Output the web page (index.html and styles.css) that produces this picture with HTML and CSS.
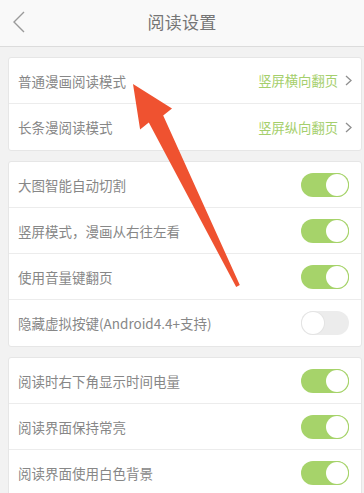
FILE: index.html
```html
<!DOCTYPE html>
<html lang="zh">
<head>
<meta charset="utf-8">
<link rel="stylesheet" href="styles.css">
</head>
<body>
<div class="page">
  <header class="topbar">
    <svg class="back" width="14" height="24" viewBox="0 0 14 24"><path d="M12 2 L2 12 L12 22" fill="none" stroke="#9a9a9a" stroke-width="1.4"/></svg>
    <h1 class="title">阅读设置</h1>
  </header>

  <section class="card">
    <div class="row">
      <span class="label">普通漫画阅读模式</span>
      <span class="value">竖屏横向翻页<svg class="chev" width="7" height="11" viewBox="0 0 7 11"><path d="M1 1 L6 5.5 L1 10" fill="none" stroke="#8f8f8f" stroke-width="1.3"/></svg></span>
    </div>
    <div class="row">
      <span class="label">长条漫阅读模式</span>
      <span class="value">竖屏纵向翻页<svg class="chev" width="7" height="11" viewBox="0 0 7 11"><path d="M1 1 L6 5.5 L1 10" fill="none" stroke="#8f8f8f" stroke-width="1.3"/></svg></span>
    </div>
  </section>

  <section class="card">
    <div class="row"><span class="label">大图智能自动切割</span><span class="toggle on"></span></div>
    <div class="row"><span class="label">竖屏模式，漫画从右往左看</span><span class="toggle on"></span></div>
    <div class="row"><span class="label">使用音量键翻页</span><span class="toggle on"></span></div>
    <div class="row"><span class="label">隐藏虚拟按键(Android4.4+支持)</span><span class="toggle"></span></div>
  </section>

  <section class="card">
    <div class="row"><span class="label">阅读时右下角显示时间电量</span><span class="toggle on"></span></div>
    <div class="row"><span class="label">阅读界面保持常亮</span><span class="toggle on"></span></div>
    <div class="row"><span class="label">阅读界面使用白色背景</span><span class="toggle on"></span></div>
  </section>

  <svg class="arrow" width="364" height="493" viewBox="0 0 364 493">
    <polygon fill="#ef5230" points="133,84 172,108.6 163.2,115.5 239.8,285.1 236.2,286.9 148.8,122.5 140.1,129.4"/>
  </svg>
</div>
</body>
</html>
```

FILE: styles.css
```css
* { box-sizing: border-box; }
html, body { margin: 0; padding: 0; }
body {
  background: #f2f2f2;
  font-family: "Noto Sans CJK SC", "Noto Sans", sans-serif;
  width: 364px;
  height: 493px;
  overflow: hidden;
}
.page { position: relative; height: 493px; }
.topbar {
  height: 47px;
  background: #f9f9f9;
  border-bottom: 1px solid #dcdcdc;
  display: flex;
  align-items: center;
  justify-content: center;
  position: relative;
}
.back { position: absolute; left: 12px; top: 10px; }
.title {
  margin: 0;
  font-size: 17px;
  font-weight: normal;
  color: #757575;
  letter-spacing: 0.2px;
  margin-top: -3px;
}
.card {
  margin: 10px 2px 0 8px;
  background: #fff;
  border: 1px solid #e6e6e6;
  border-radius: 3px;
}
.row {
  height: 46px;
  display: flex;
  align-items: center;
  justify-content: space-between;
  padding: 0 12px 0 9px;
  border-bottom: 1px solid #ececec;
}
.row:last-child { border-bottom: none; }
.label {
  font-size: 13.5px;
  color: #878787;
}
.value {
  font-size: 13.3px;
  color: #a5cf6c;
  display: flex;
  align-items: center;
  margin-right: -3px;
}
.chev { margin-left: 7px; }
.toggle {
  width: 48px;
  height: 24px;
  border-radius: 12px;
  background: #ececec;
  position: relative;
  flex: none;
}
.toggle::after {
  content: "";
  position: absolute;
  top: 1px;
  left: 1px;
  width: 22px;
  height: 22px;
  border-radius: 50%;
  background: #fff;
  box-shadow: 0 0 0 1px #e4e4e4;
}
.toggle.on { background: #a6d36a; }
.toggle.on::after { left: 25px; box-shadow: 0 0 0 1px #a6d36a; }
.arrow { position: absolute; left: 0; top: 0; pointer-events: none; }
```
